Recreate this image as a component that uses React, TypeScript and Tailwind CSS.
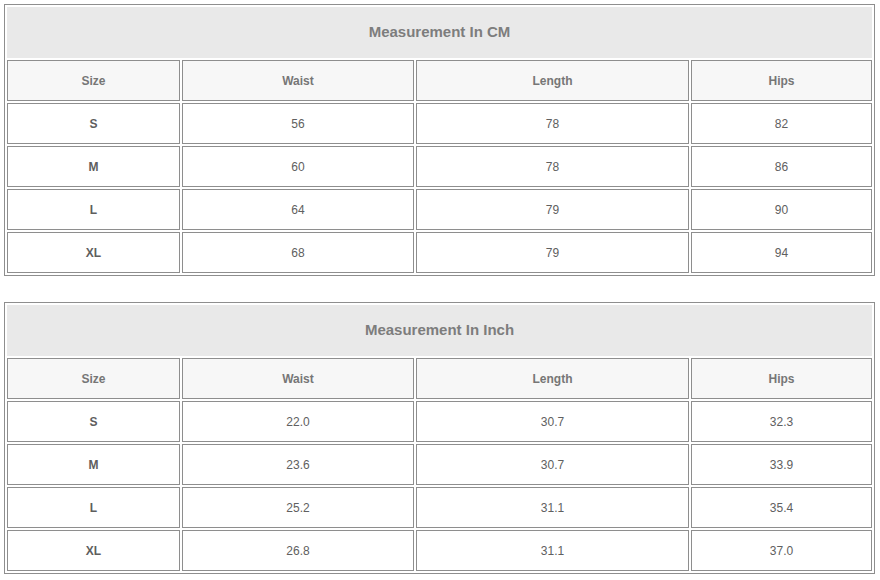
import React from 'react'

type Row = { size: string; waist: string; length: string; hips: string }

const cmRows: Row[] = [
  { size: 'S', waist: '56', length: '78', hips: '82' },
  { size: 'M', waist: '60', length: '78', hips: '86' },
  { size: 'L', waist: '64', length: '79', hips: '90' },
  { size: 'XL', waist: '68', length: '79', hips: '94' }
]

const inchRows: Row[] = [
  { size: 'S', waist: '22.0', length: '30.7', hips: '32.3' },
  { size: 'M', waist: '23.6', length: '30.7', hips: '33.9' },
  { size: 'L', waist: '25.2', length: '31.1', hips: '35.4' },
  { size: 'XL', waist: '26.8', length: '31.1', hips: '37.0' }
]

const cols = 'grid grid-cols-[173px_232px_273px_181px] gap-[2px]'
const cell = 'h-[41px] flex items-center justify-center border border-[#8e8e8e] text-[12px]'

function SizeTable({ title, rows }: { title: string; rows: Row[] }) {
  return (
    <div className="w-[871px] border border-[#8e8e8e] p-[2px] flex flex-col gap-[2px]">
      {/* title bar */}
      <div className="h-[51px] bg-[#e9e9e9] flex items-center justify-center text-[15px] font-bold text-[#7d7d7d]">
        {title}
      </div>

      <div className={cols}>
        {['Size', 'Waist', 'Length', 'Hips'].map((h) => (
          <div key={h} className={`${cell} bg-[#f7f7f7] font-bold text-[#767676]`}>
            {h}
          </div>
        ))}
      </div>

      {rows.map((r) => (
        <div key={r.size} className={cols}>
          <div className={`${cell} font-bold text-[#5e5e5e]`}>{r.size}</div>
          <div className={`${cell} text-[#606060]`}>{r.waist}</div>
          <div className={`${cell} text-[#606060]`}>{r.length}</div>
          <div className={`${cell} text-[#606060]`}>{r.hips}</div>
        </div>
      ))}
    </div>
  )
}

export default function App() {
  return (
    <div className="w-[880px] h-[580px] bg-white pt-[4px] pl-[4px] flex flex-col gap-[26px] font-['Liberation_Sans',Arial,sans-serif]">
      <SizeTable title="Measurement In CM" rows={cmRows} />
      <SizeTable title="Measurement In Inch" rows={inchRows} />
    </div>
  )
}
